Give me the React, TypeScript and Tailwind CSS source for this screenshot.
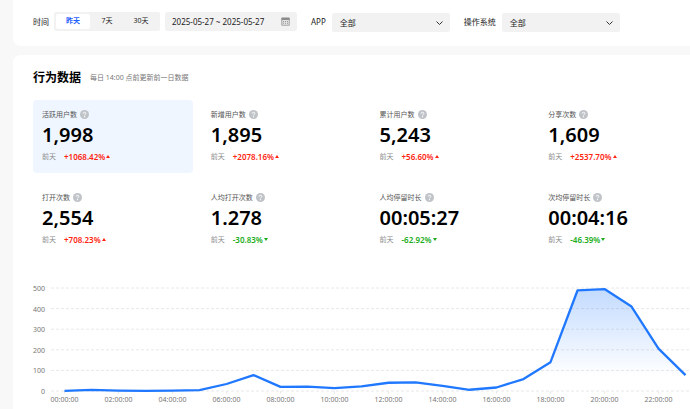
import React, { useId, useState } from 'react';

interface Metric {
  label: string;
  value: string;
  change: string;
  up: boolean;
}

const METRICS: Metric[] = [
  { label: '活跃用户数', value: '1,998', change: '+1068.42%', up: true },
  { label: '新增用户数', value: '1,895', change: '+2078.16%', up: true },
  { label: '累计用户数', value: '5,243', change: '+56.60%', up: true },
  { label: '分享次数', value: '1,609', change: '+2537.70%', up: true },
  { label: '打开次数', value: '2,554', change: '+708.23%', up: true },
  { label: '人均打开次数', value: '1.278', change: '-30.83%', up: false },
  { label: '人均停留时长', value: '00:05:27', change: '-62.92%', up: false },
  { label: '次均停留时长', value: '00:04:16', change: '-46.39%', up: false },
];

const RANGES = ['昨天', '7天', '30天'];

// 시간대별 활성 사용자 수 (0시 ~ 23시)
const HOURLY = [
  1, 5, 2, 1, 2, 4, 34, 77, 20, 21, 14, 22, 40, 42, 25, 6, 17, 58, 140, 488, 495, 410, 206, 77,
];
const Y_TICKS = [500, 400, 300, 200, 100, 0];
const HOURS = [
  '00:00:00', '02:00:00', '04:00:00', '06:00:00', '08:00:00', '10:00:00',
  '12:00:00', '14:00:00', '16:00:00', '18:00:00', '20:00:00', '22:00:00',
];

const HelpIcon = () => (
  <svg viewBox="0 0 18 18" className="size-[9px] shrink-0" aria-hidden="true">
    <circle cx="9" cy="9" r="9" fill="#bfc3c7" />
    <path
      d="M6.3 7.2C6.3 5.5 7.4 4.5 9 4.5s2.7 1 2.7 2.4c0 1.900-2.700 2.100-2.700 4"
      fill="none"
      stroke="#fff"
      strokeWidth="2"
    />
    <circle cx="9" cy="13.400" r="1.300" fill="#fff" />
  </svg>
);

const CalendarIcon = () => (
  <svg viewBox="0 0 18 18" className="size-[9px] shrink-0" aria-hidden="true">
    <path d="M1.500 2h15v14.500h-15z" fill="#e4e4e4" stroke="#8c8c8c" strokeWidth="1.500" />
    <path d="M1 1.500h16v4.500H1z" fill="#8c8c8c" />
    <path d="M4 9h2M8 9h2M12 9h2M4 12.500h2M8 12.500h2M12 12.500h2" stroke="#8c8c8c" strokeWidth="1.800" />
  </svg>
);

interface FilterSelectProps {
  label: string;
}

/** 라벨이 붙은 드롭다운 필터 */
const FilterSelect: React.FC<FilterSelectProps> = ({ label }) => {
  const id = useId();

  return (
    <div className="flex items-center gap-[6px]">
      <label htmlFor={id} className="whitespace-nowrap">
        {label}
      </label>
      <div className="relative mt-px">
        <select
          id={id}
          className="block h-[19px] w-[118px] appearance-none rounded-xs bg-[#f2f2f2] px-2 text-[8px] leading-[17px]"
        >
          <option>全部</option>
        </select>
        <svg
          viewBox="0 0 14 8"
          className="pointer-events-none absolute top-2 right-[7px] h-1 w-[7px] overflow-visible"
          fill="none"
          stroke="#333"
          strokeWidth="2"
          aria-hidden="true"
        >
          <path d="M1 1l6 6 6-6" />
        </svg>
      </div>
    </div>
  );
};

interface MetricCardProps {
  metric: Metric;
  active: boolean;
  onSelect: () => void;
}

/** 지표 카드: 이름, 값, 전일 대비 증감률 */
const MetricCard: React.FC<MetricCardProps> = ({ metric, active, onSelect }) => (
  <button
    type="button"
    aria-pressed={active}
    onClick={onSelect}
    className={`flex h-[73px] flex-col rounded px-[9px] pt-[9px] text-left ${active ? 'bg-[#eff6ff]' : ''}`}
  >
    <span className="flex items-center gap-[3px] text-[7px] leading-[11px] text-[#555]">
      {metric.label}
      <HelpIcon />
    </span>
    <span className="text-[20px] leading-[30px] font-semibold text-black">{metric.value}</span>
    <span className="flex items-center text-[7px] leading-[13px]">
      <span className="w-[22px] text-[#8c8c8c]">前天</span>
      <span className={`text-[8px] font-semibold ${metric.up ? 'text-[#ff2410]' : 'text-[#1aad19]'}`}>
        {metric.change}
      </span>
      <svg
        viewBox="0 0 8 6"
        className={`ml-px h-[3px] w-1 ${metric.up ? 'text-[#ff2410]' : 'text-[#1aad19]'}`}
        fill="currentColor"
        aria-hidden="true"
      >
        <path d={metric.up ? 'M4 0l4 6H0z' : 'M0 0h8L4 6z'} />
      </svg>
    </span>
  </button>
);

/** 시간대별 추이 차트 */
const TrendChart = () => {
  // 한 시간 = 가로 20, 값 500 = 세로 500
  const points = HOURLY.map((v, i) => `${i * 20 + 10},${500 - v}`).join(' ');

  return (
    <div className="flex gap-[6px] text-[7px] text-[#777]">
      <div className="-mt-1 flex h-[112px] w-3 flex-col justify-between text-right leading-[9px]">
        {Y_TICKS.map((tick) => (
          <span key={tick}>{tick}</span>
        ))}
      </div>
      <div className="flex-1">
        <svg viewBox="0 0 480 500" preserveAspectRatio="none" className="block h-[103px] w-full overflow-visible">
          <defs>
            <linearGradient id="trend-fill" x1="0" y1="0" x2="0" y2="1">
              <stop offset="0" stopColor="#1f78ff" stopOpacity="0.27" />
              <stop offset="0.85" stopColor="#1f78ff" stopOpacity="0" />
            </linearGradient>
          </defs>
          {Y_TICKS.map((tick) => (
            <line
              key={tick}
              x1="0"
              x2="480"
              y1={500 - tick}
              y2={500 - tick}
              stroke="#e8e8e8"
              strokeDasharray="3 2"
              vectorEffect="non-scaling-stroke"
            />
          ))}
          {HOURS.map((hour, i) => (
            <line
              key={hour}
              x1={i * 40 + 10}
              x2={i * 40 + 10}
              y1="500"
              y2="512"
              stroke="#e8e8e8"
              vectorEffect="non-scaling-stroke"
            />
          ))}
          <polygon points={`10,500 ${points} 470,500`} fill="url(#trend-fill)" />
          <polyline
            points={points}
            fill="none"
            stroke="#1f78ff"
            strokeWidth="2.300"
            strokeLinejoin="round"
            vectorEffect="non-scaling-stroke"
          />
        </svg>
        <div className="mt-1 grid grid-cols-12 leading-[10px]">
          {HOURS.map((hour) => (
            <div key={hour} className="flex w-1/2 justify-center">
              <span>{hour}</span>
            </div>
          ))}
        </div>
      </div>
    </div>
  );
};

const App: React.FC = () => {
  const [range, setRange] = useState('昨天');
  const [selected, setSelected] = useState('活跃用户数');

  return (
    <div className="min-h-screen overflow-x-hidden bg-[#f8f8f8] font-['Noto_Sans','Noto_Sans_CJK_SC',sans-serif] text-[#222]">
      <main className="flex min-h-screen min-w-[719px] flex-col gap-[9px] pl-[13px]">
        {/* 필터 */}
        <section className="flex items-start gap-[14px] rounded-b-lg bg-white px-5 pt-3 pb-[14px] text-[8px]">
          <div className="flex items-center gap-[5px]">
            <span className="whitespace-nowrap">时间</span>
            <div className="flex h-[19px] w-[106px] rounded-xs bg-[#f2f2f2] p-0.5 text-[7px]">
              {RANGES.map((item) => (
                <button
                  key={item}
                  type="button"
                  onClick={() => setRange(item)}
                  className={`flex-1 rounded-xs ${range === item ? 'bg-white font-bold text-[#1f5eff]' : ''}`}
                >
                  {item}
                </button>
              ))}
            </div>
            <div className="flex h-[19px] w-[132px] items-center rounded-xs bg-[#f2f2f2] px-[7px]">
              <input
                type="text"
                aria-label="日期范围"
                readOnly
                value="2025-05-27 ~ 2025-05-27"
                className="min-w-0 flex-1 text-[8px] outline-none"
              />
              <CalendarIcon />
            </div>
          </div>
          <FilterSelect label="APP" />
          <FilterSelect label="操作系统" />
        </section>

        {/* 행위 데이터 */}
        <section className="flex-1 rounded-t-lg bg-white px-5 pt-[14px]">
          <div className="flex items-center gap-[9px]">
            <h1 className="text-[12px] leading-[18px] font-bold text-black">行为数据</h1>
            <p className="text-[7px] text-[#777]">每日 14:00 点前更新前一日数据</p>
          </div>
          <div className="mt-[13px] mb-[32px] grid grid-cols-4 gap-x-[9px] gap-y-[10px]">
            {METRICS.map((metric) => (
              <MetricCard
                key={metric.label}
                metric={metric}
                active={metric.label === selected}
                onSelect={() => setSelected(metric.label)}
              />
            ))}
          </div>
          <TrendChart />
        </section>
      </main>
    </div>
  );
};

export default App;
